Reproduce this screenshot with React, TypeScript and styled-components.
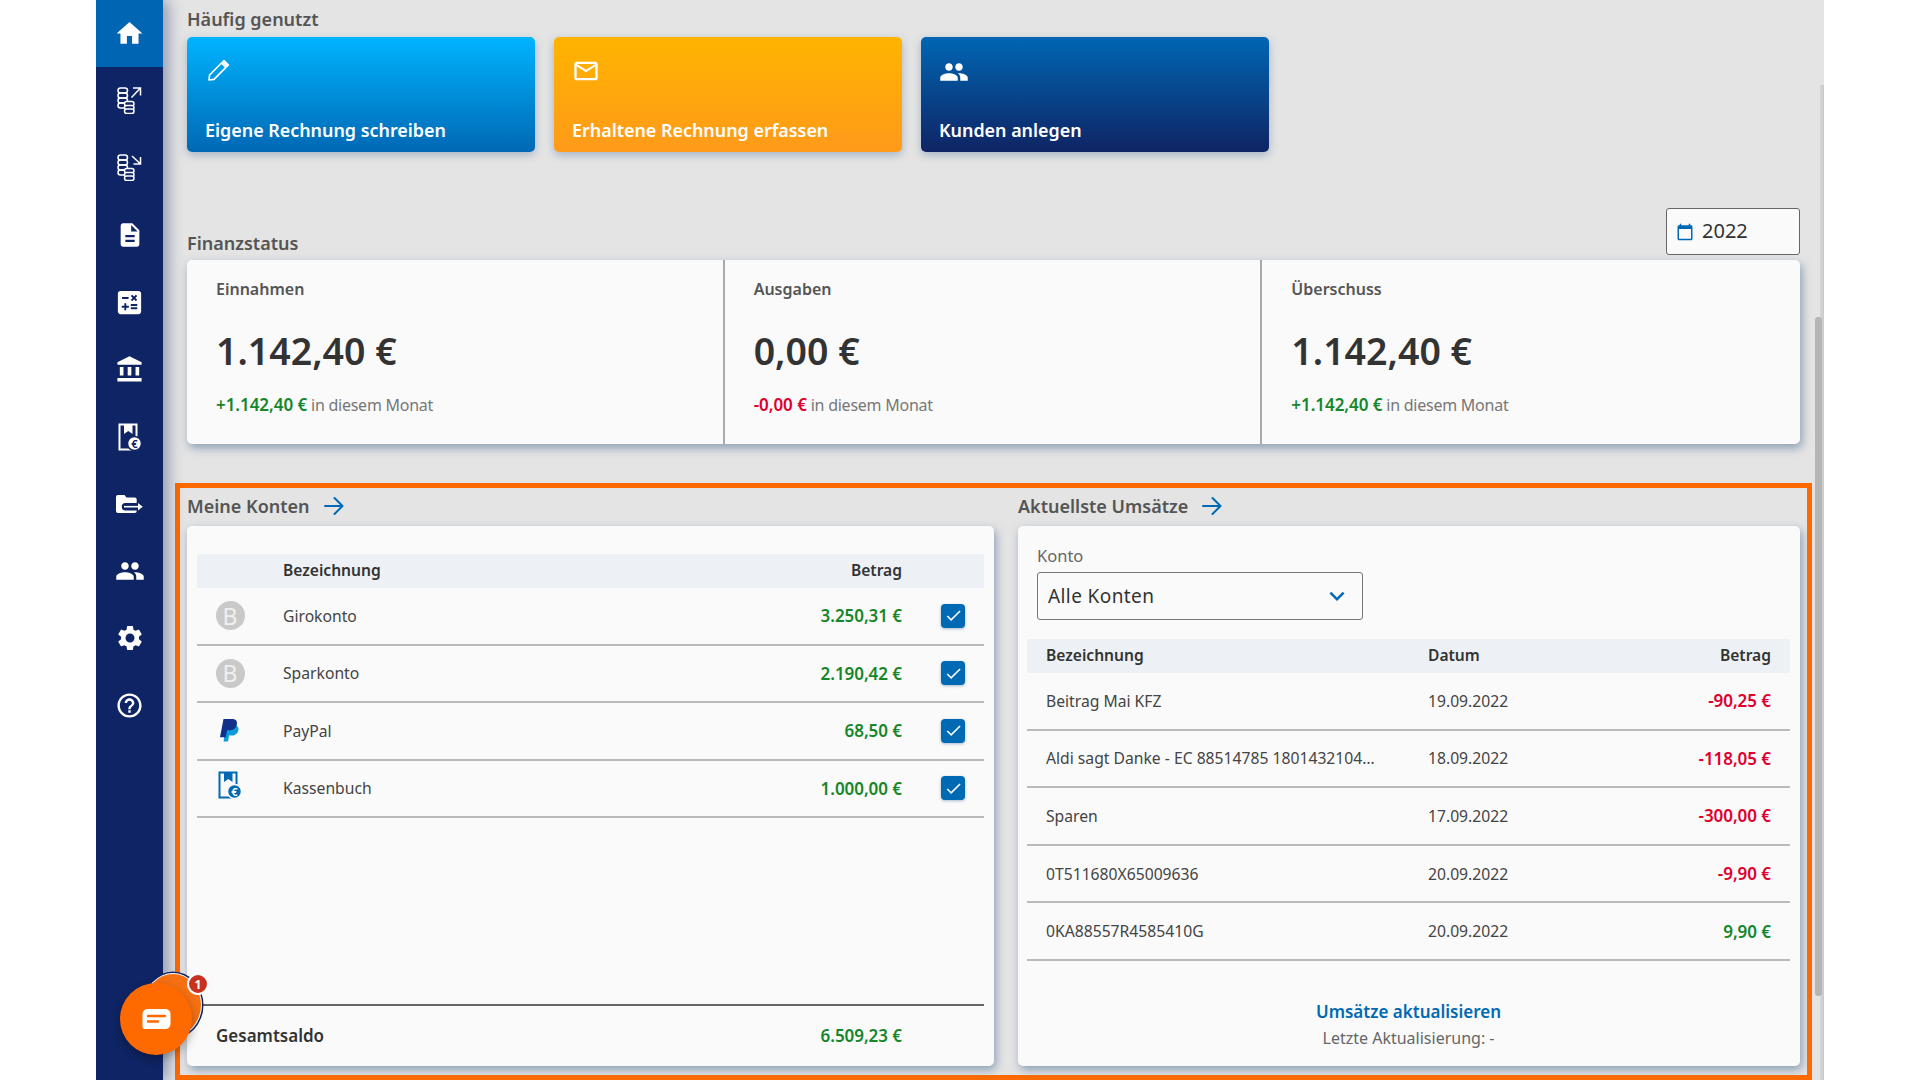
import React from 'react';
import styled, {createGlobalStyle} from 'styled-components';
import {
  MdAccountBalance,
  MdCalculate,
  MdCalendarToday,
  MdCheck,
  MdDescription,
  MdHelpOutline,
  MdHome,
  MdKeyboardArrowDown,
  MdMailOutline,
  MdPeople,
  MdSettings,
} from 'react-icons/md';

const NAVY = '#0f2464';
const BLUE = '#0069b4';
const ORANGE = '#ff6a00';

const GlobalStyle = createGlobalStyle`
  html, body {
    margin: 0;
    padding: 0;
    background: #fff;
    overflow: hidden;
  }
  body {
    font-family: "Noto Sans", "Open Sans", sans-serif;
    color: #333;
  }
  * {
    box-sizing: border-box;
  }
`;

const Frame = styled.div`
  position: relative;
  display: flex;
  width: 1728px;
  height: 1080px;
  margin-left: 96px;
  overflow: hidden;
  background: #e4e4e4;
`;

const Sidebar = styled.nav`
  flex: 0 0 67px;
  display: flex;
  flex-direction: column;
  background: ${NAVY};
  box-shadow: 5px 0 14px rgba(15, 36, 100, 0.4);
  z-index: 1;
`;

const NavItem = styled.div<{$active?: boolean}>`
  flex: 0 0 67.2px;
  display: flex;
  align-items: center;
  justify-content: center;
  color: #fff;
  background: ${p => (p.$active ? '#0065b3' : 'transparent')};
`;

const Main = styled.main`
  flex: 1;
  display: flex;
  flex-direction: column;
  min-width: 0;
`;

const TopSection = styled.section`
  padding: 0 24px;
`;

const Heading = styled.h2`
  margin: 0;
  font-size: 18px;
  line-height: 24px;
  font-weight: 600;
  color: #555;
`;

const QuickHeading = styled(Heading)`
  padding-top: 7px;
  height: 37px;
`;

const QuickRow = styled.div`
  display: flex;
  gap: 19px;
`;

const QuickCard = styled.div<{$from: string; $to: string}>`
  width: 348px;
  height: 115px;
  padding: 20px 18px 0;
  display: flex;
  flex-direction: column;
  justify-content: space-between;
  border-radius: 5px;
  color: #fff;
  background: linear-gradient(${p => p.$from}, ${p => p.$to});
  box-shadow: 0 3px 8px rgba(90, 120, 160, 0.45);
`;

const QuickLabel = styled.div`
  padding-bottom: 9px;
  font-size: 17.9px;
  line-height: 26px;
  font-weight: 600;
`;

const StatusHeader = styled.div`
  display: flex;
  justify-content: space-between;
  align-items: flex-end;
  margin-top: 56px;
  padding-bottom: 5px;
`;

const YearBox = styled.div`
  width: 134px;
  height: 47px;
  padding: 0 0 3px 9px;
  display: flex;
  align-items: center;
  gap: 8px;
  font-size: 20px;
  color: #333;
  background: #fafafa;
  border: 1px solid #666;
  border-radius: 3px;

  svg {
    color: ${BLUE};
    margin-top: 3px;
  }
`;

const StatusCard = styled.div`
  display: grid;
  grid-template-columns: repeat(3, 1fr);
  height: 184px;
  background: #fafafa;
  border-radius: 5px;
  box-shadow: 2px 4px 10px rgba(100, 130, 160, 0.7);
`;

const StatCell = styled.div`
  padding: 17px 0 0 29px;

  &:not(:last-child) {
    border-right: 2px solid #aaa;
  }
`;

const StatTitle = styled.div`
  font-size: 16px;
  line-height: 24px;
  font-weight: 600;
  color: #555;
`;

const StatValue = styled.div`
  margin-top: 25px;
  font-size: 37.5px;
  line-height: 50px;
  font-weight: 600;
  color: #333;
`;

const StatNote = styled.div`
  margin-top: 17px;
  font-size: 16px;
  line-height: 24px;
  letter-spacing: -0.25px;
  color: #777;
`;

const Amount = styled.span<{$tone: 'plus' | 'minus'}>`
  font-size: 17px;
  letter-spacing: -0.05px;
  font-weight: 600;
  color: ${p => (p.$tone === 'plus' ? '#15872a' : '#e0002d')};
`;

const Highlight = styled.section`
  flex: 1;
  margin: 39px 12px 0;
  padding: 0 7px 9px;
  display: grid;
  grid-template-columns: 807px 1fr;
  grid-template-rows: 38px 1fr;
  column-gap: 24px;
  border: 5px solid ${ORANGE};
`;

const LinkHeading = styled(Heading)`
  display: flex;
  align-items: center;
  gap: 14px;
  padding-bottom: 2px;
`;

const Panel = styled.div`
  display: flex;
  flex-direction: column;
  padding: 28px 10px 0;
  background: #fafafa;
  border-radius: 5px;
  box-shadow: 2px 4px 10px rgba(100, 130, 160, 0.7);
`;

const AccountGrid = styled.div`
  display: grid;
  grid-template-columns: 86px 1fr auto 82px;
  align-items: center;
  font-size: 15.7px;
`;

const AccountHead = styled(AccountGrid)`
  height: 34px;
  padding-bottom: 2px;
  font-size: 15.6px;
  font-weight: 600;
  background: #edf1f5;
`;

const AccountRow = styled(AccountGrid)`
  height: 57.5px;
  border-bottom: 2px solid #bbb;
  color: #444;
`;

const RightCell = styled.span`
  grid-column: 3;
  text-align: right;
`;

const IconCell = styled.span<{$lift?: number}>`
  display: flex;
  justify-content: center;
  padding-right: 20px;
  padding-bottom: ${p => p.$lift ?? 0}px;
`;

const BankBadge = styled.span`
  width: 29px;
  height: 29px;
  display: flex;
  align-items: center;
  justify-content: center;
  border-radius: 50%;
  font-size: 23px;
  color: #f0f0f0;
  background: #c9c9c9;
`;

const CheckBox = styled.span`
  justify-self: center;
  margin-left: 20px;
  width: 24px;
  height: 24px;
  display: flex;
  align-items: center;
  justify-content: center;
  border-radius: 4px;
  color: #fff;
  background: ${BLUE};
  box-shadow: 0 1px 3px rgba(0, 60, 120, 0.35);
`;

const TotalRow = styled(AccountGrid)`
  margin-top: auto;
  height: 62px;
  padding-bottom: 2px;
  border-top: 2px solid #666;
  font-size: 17px;
  font-weight: 600;
`;

const TotalLabel = styled.span`
  padding-left: 19px;
  grid-column: 1 / span 2;
`;

const SalesPanel = styled(Panel)`
  padding: 19px 10px 0 9px;
`;

const FieldLabel = styled.div`
  margin-left: 10px;
  font-size: 16.5px;
  line-height: 22px;
  color: #666;
`;

const SelectBox = styled.div`
  margin: 5px 0 19px 10px;
  width: 326px;
  height: 48px;
  padding: 0 10px;
  display: flex;
  align-items: center;
  justify-content: space-between;
  font-size: 19px;
  letter-spacing: 0.4px;
  color: #333;
  border: 1.5px solid #777;
  border-radius: 3px;

  svg {
    color: ${BLUE};
  }
`;

const SalesGrid = styled.div`
  display: grid;
  grid-template-columns: 382px 1fr auto;
  align-items: center;
  padding: 0 19px;
  font-size: 15.7px;
`;

const SalesHead = styled(SalesGrid)`
  height: 34px;
  padding-bottom: 2px;
  font-size: 15.6px;
  font-weight: 600;
  background: #edf1f5;
`;

const SalesRow = styled(SalesGrid)`
  height: 57.6px;
  border-bottom: 2px solid #bbb;
  color: #444;
`;

const SalesName = styled.span`
  padding-right: 50px;
  overflow: hidden;
  white-space: nowrap;
  text-overflow: ellipsis;
`;

const SalesFooter = styled.div`
  margin-top: 38px;
  text-align: center;
  font-size: 16px;
  line-height: 26px;
  color: #666;
`;

const RefreshLink = styled.div`
  font-size: 17px;
  font-weight: 600;
  color: ${BLUE};
`;

const ScrollTrack = styled.div`
  position: absolute;
  right: 0;
  top: 85px;
  bottom: 0;
  width: 4px;
  background: linear-gradient(90deg, #d8d8d8, #c9c9c9);
  z-index: 2;
`;

const ScrollThumb = styled.div`
  position: absolute;
  left: 1719px;
  top: 317px;
  width: 7px;
  height: 679px;
  border-radius: 3px;
  background: #b5b5b5;
  z-index: 2;
`;

const ChatBack = styled.div`
  position: absolute;
  left: 48px;
  top: 973px;
  width: 58px;
  height: 64px;
  border-radius: 50%;
  background: #f57012;
  border: 1.5px solid #fff;
  box-shadow: 0 0 0 1.5px ${NAVY};
  z-index: 3;
`;

const ChatButton = styled.div`
  position: absolute;
  left: 24px;
  top: 983px;
  width: 72px;
  height: 72px;
  display: flex;
  align-items: center;
  justify-content: center;
  border-radius: 50%;
  background: ${ORANGE};
  box-shadow: 0 4px 10px rgba(0, 0, 0, 0.3);
  z-index: 4;
`;

const ChatBadge = styled.div`
  position: absolute;
  left: 91px;
  top: 973px;
  width: 22px;
  height: 22px;
  display: flex;
  align-items: center;
  justify-content: center;
  border-radius: 50%;
  font-size: 12px;
  font-weight: 700;
  color: #fff;
  background: #c8311e;
  border: 2px solid #fff;
  z-index: 5;
`;

const CoinsIcon = ({down}: {down?: boolean}) => (
  <svg width="25" height="27" viewBox="0 0 25 27" fill="none" stroke="currentColor" strokeWidth="1.5">
    {[1, 6, 11, 16].map(y => (
      <rect key={y} x="1" y={y} width="9.5" height="5" rx="2.5" />
    ))}
    {[14.5, 18.5, 22].map(y => (
      <rect key={y} x="7.5" y={y} width="9.5" height="4.5" rx="2.2" fill={NAVY} />
    ))}
    {down ? (
      <path d="M15 2l8 7.5M23.5 3v7h-7" />
    ) : (
      <path d="M14.5 10.5l8.5-9M16 1h7.5v7.5" />
    )}
  </svg>
);

const CashbookIcon = ({color, cut}: {color: string; cut: string}) => (
  <svg width="24" height="28" viewBox="0 0 24 28" fill="none">
    <path d="M1.5 1.5h17v25h-17z" stroke={color} strokeWidth="2" />
    <path d="M6 1.5h8.5v9.5l-4.2-3-4.3 3z" fill={color} />
    <circle cx="16.5" cy="20.5" r="7" fill={color} stroke={cut} strokeWidth="1.5" />
    <text x="16.5" y="24.5" textAnchor="middle" fontSize="11" fontWeight="700" fill={cut} fontFamily="Noto Sans">
      €
    </text>
  </svg>
);

const FolderIcon = () => (
  <svg width="27" height="18" viewBox="0 0 27 18">
    <path
      d="M2 0h6.5l2 2.5h8.2a2 2 0 0 1 2 2V16a2 2 0 0 1-2 2H2a2 2 0 0 1-2-2V2a2 2 0 0 1 2-2z"
      fill="#fff"
    />
    <path d="M9.5 8h13v7.5h-13a3.75 3.75 0 0 1 0-7.5z" fill={NAVY} />
    <path d="M8 11.7h15" stroke="#fff" strokeWidth="1.6" />
    <path d="M22 8l4.8 3.7L22 15.4z" fill="#fff" />
  </svg>
);

const PencilIcon = () => (
  <svg width="25" height="25" viewBox="-2 -2 25 25" fill="none" stroke="#fff" strokeWidth="1.7" strokeLinejoin="round">
    <path d="M2 21l.6-5L14.5 4l4.4 4.4L7 20.4z" />
    <path d="M17 1.6l4.4 4.4-1.3 1.3-4.4-4.4z" fill="#fff" />
  </svg>
);

const ArrowIcon = () => (
  <svg width="20" height="20" viewBox="0 0 20 20" fill="none" stroke={BLUE} strokeWidth="2" strokeLinecap="round" strokeLinejoin="round">
    <path d="M1 10h17M10.5 2l8 8-8 8" />
  </svg>
);

const PaypalIcon = () => (
  <svg width="20" height="23" viewBox="0 0 20 23">
    <path d="M5.5 6H13c4 0 6 2 5.4 5-.6 3.6-3.2 5.5-7 5.5H9l-1 6H3.6z" fill="#0a9bdc" />
    <path d="M3.5 0h8c4 0 6 1.8 5.4 5.3-.7 4-3.6 6-7.4 6H7l-1.2 7H0z" fill="#10308a" />
  </svg>
);

const ChatIcon = () => (
  <svg width="29" height="21" viewBox="0 0 29 21">
    <path
      d="M6 0h17a5 5 0 0 1 5.5 5v10a5 5 0 0 1-5.5 5H3a2.5 2.5 0 0 1-2.5-2.5V5A5 5 0 0 1 6 0z"
      fill="#fff"
    />
    <path d="M6 7h17M6 12.5h10" stroke={ORANGE} strokeWidth="2.4" strokeLinecap="round" />
  </svg>
);

const accounts = [
  {name: 'Girokonto', amount: '3.250,31 €', lift: 0, icon: <BankBadge>B</BankBadge>},
  {name: 'Sparkonto', amount: '2.190,42 €', lift: 0, icon: <BankBadge>B</BankBadge>},
  {name: 'PayPal', amount: '68,50 €', lift: 0, icon: <PaypalIcon />},
  {
    name: 'Kassenbuch',
    amount: '1.000,00 €',
    lift: 6,
    icon: <CashbookIcon color={BLUE} cut="#fafafa" />,
  },
];

const sales: {name: string; date: string; amount: string; tone: 'plus' | 'minus'}[] = [
  {name: 'Beitrag Mai KFZ', date: '19.09.2022', amount: '-90,25 €', tone: 'minus'},
  {
    name: 'Aldi sagt Danke - EC 88514785 180143210400000',
    date: '18.09.2022',
    amount: '-118,05 €',
    tone: 'minus',
  },
  {name: 'Sparen', date: '17.09.2022', amount: '-300,00 €', tone: 'minus'},
  {name: '0T511680X65009636', date: '20.09.2022', amount: '-9,90 €', tone: 'minus'},
  {name: '0KA88557R4585410G', date: '20.09.2022', amount: '9,90 €', tone: 'plus'},
];

const stats: {title: string; value: string; month: string; tone: 'plus' | 'minus'}[] = [
  {title: 'Einnahmen', value: '1.142,40 €', month: '+1.142,40 €', tone: 'plus'},
  {title: 'Ausgaben', value: '0,00 €', month: '-0,00 €', tone: 'minus'},
  {title: 'Überschuss', value: '1.142,40 €', month: '+1.142,40 €', tone: 'plus'},
];

export default function App() {
  return (
    <>
      <GlobalStyle />
      <Frame>
        <Sidebar>
          <NavItem $active>
            <MdHome size={31} />
          </NavItem>
          <NavItem>
            <CoinsIcon />
          </NavItem>
          <NavItem>
            <CoinsIcon down />
          </NavItem>
          <NavItem>
            <MdDescription size={28} />
          </NavItem>
          <NavItem>
            <MdCalculate size={31} />
          </NavItem>
          <NavItem>
            <MdAccountBalance size={29} />
          </NavItem>
          <NavItem>
            <CashbookIcon color="#fff" cut={NAVY} />
          </NavItem>
          <NavItem>
            <FolderIcon />
          </NavItem>
          <NavItem>
            <MdPeople size={30} />
          </NavItem>
          <NavItem>
            <MdSettings size={30} />
          </NavItem>
          <NavItem>
            <MdHelpOutline size={29} />
          </NavItem>
        </Sidebar>
        <Main>
          <TopSection>
            <QuickHeading>Häufig genutzt</QuickHeading>
            <QuickRow>
              <QuickCard $from="#00b4ff" $to="#0068b4">
                <PencilIcon />
                <QuickLabel>Eigene Rechnung schreiben</QuickLabel>
              </QuickCard>
              <QuickCard $from="#ffb400" $to="#ff9a1a">
                <MdMailOutline size={28} />
                <QuickLabel>Erhaltene Rechnung erfassen</QuickLabel>
              </QuickCard>
              <QuickCard $from="#0066b3" $to={NAVY}>
                <MdPeople size={30} />
                <QuickLabel>Kunden anlegen</QuickLabel>
              </QuickCard>
            </QuickRow>
            <StatusHeader>
              <Heading>Finanzstatus</Heading>
              <YearBox>
                <MdCalendarToday size={18} />
                2022
              </YearBox>
            </StatusHeader>
            <StatusCard>
              {stats.map(stat => (
                <StatCell key={stat.title}>
                  <StatTitle>{stat.title}</StatTitle>
                  <StatValue>{stat.value}</StatValue>
                  <StatNote>
                    <Amount $tone={stat.tone}>{stat.month}</Amount> in diesem Monat
                  </StatNote>
                </StatCell>
              ))}
            </StatusCard>
          </TopSection>
          <Highlight>
            <LinkHeading>
              Meine Konten <ArrowIcon />
            </LinkHeading>
            <LinkHeading>
              Aktuellste Umsätze <ArrowIcon />
            </LinkHeading>
            <Panel>
              <AccountHead>
                <span />
                <span>Bezeichnung</span>
                <RightCell>Betrag</RightCell>
              </AccountHead>
              {accounts.map(account => (
                <AccountRow key={account.name}>
                  <IconCell $lift={account.lift}>{account.icon}</IconCell>
                  <span>{account.name}</span>
                  <RightCell>
                    <Amount $tone="plus">{account.amount}</Amount>
                  </RightCell>
                  <CheckBox>
                    <MdCheck size={19} />
                  </CheckBox>
                </AccountRow>
              ))}
              <TotalRow>
                <TotalLabel>Gesamtsaldo</TotalLabel>
                <RightCell>
                  <Amount $tone="plus">6.509,23 €</Amount>
                </RightCell>
              </TotalRow>
            </Panel>
            <SalesPanel>
              <FieldLabel>Konto</FieldLabel>
              <SelectBox>
                Alle Konten
                <MdKeyboardArrowDown size={30} />
              </SelectBox>
              <SalesHead>
                <span>Bezeichnung</span>
                <span>Datum</span>
                <span>Betrag</span>
              </SalesHead>
              {sales.map(sale => (
                <SalesRow key={sale.name}>
                  <SalesName>{sale.name}</SalesName>
                  <span>{sale.date}</span>
                  <Amount $tone={sale.tone}>{sale.amount}</Amount>
                </SalesRow>
              ))}
              <SalesFooter>
                <RefreshLink>Umsätze aktualisieren</RefreshLink>
                Letzte Aktualisierung: -
              </SalesFooter>
            </SalesPanel>
          </Highlight>
        </Main>
        <ScrollTrack />
        <ScrollThumb />
        <ChatBack />
        <ChatButton>
          <ChatIcon />
        </ChatButton>
        <ChatBadge>1</ChatBadge>
      </Frame>
    </>
  );
}
